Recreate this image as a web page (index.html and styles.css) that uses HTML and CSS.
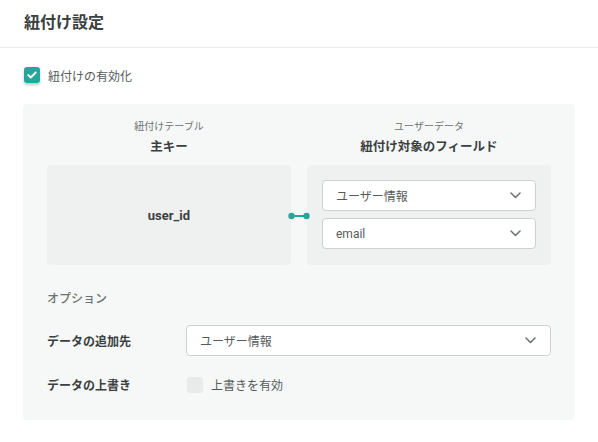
FILE: index.html
```html
<!DOCTYPE html>
<html lang="ja">
<head>
<meta charset="utf-8">
<link rel="stylesheet" href="styles.css">
</head>
<body>
<header class="header"><h1 class="title">紐付け設定</h1></header>
<main class="content">
  <label class="check-row">
    <span class="checkbox checked">
      <svg width="10" height="8" viewBox="0 0 10 8"><path d="M1.3 4.1 L3.8 6.5 L8.7 1.5" fill="none" stroke="#fff" stroke-width="1.9" stroke-linecap="round" stroke-linejoin="round"/></svg>
    </span>
    <span class="check-label">紐付けの有効化</span>
  </label>

  <section class="panel">
    <div class="mapping">
      <div class="col">
        <div class="col-sub">紐付けテーブル</div>
        <div class="col-title">主キー</div>
        <div class="box key-box">user_id</div>
      </div>
      <div class="col">
        <div class="col-sub">ユーザーデータ</div>
        <div class="col-title">紐付け対象のフィールド</div>
        <div class="box field-box">
          <div class="select"><span>ユーザー情報</span><svg class="chev" width="11" height="7" viewBox="0 0 11 7"><path d="M1 1 L5.5 5.5 L10 1" fill="none" stroke="#6f7777" stroke-width="1.6" stroke-linecap="round" stroke-linejoin="round"/></svg></div>
          <div class="select"><span>email</span><svg class="chev" width="11" height="7" viewBox="0 0 11 7"><path d="M1 1 L5.5 5.5 L10 1" fill="none" stroke="#6f7777" stroke-width="1.6" stroke-linecap="round" stroke-linejoin="round"/></svg></div>
        </div>
      </div>
      <svg class="connector" width="22" height="8" viewBox="0 0 22 8"><line x1="3" y1="4" x2="19" y2="4" stroke="#26a69a" stroke-width="2"/><circle cx="3.5" cy="4" r="3.2" fill="#26a69a"/><circle cx="18.5" cy="4" r="3.2" fill="#26a69a"/></svg>
    </div>

    <div class="options-title">オプション</div>
    <div class="opt-row">
      <div class="opt-label">データの追加先</div>
      <div class="select wide"><span>ユーザー情報</span><svg class="chev" width="11" height="7" viewBox="0 0 11 7"><path d="M1 1 L5.5 5.5 L10 1" fill="none" stroke="#6f7777" stroke-width="1.6" stroke-linecap="round" stroke-linejoin="round"/></svg></div>
    </div>
    <div class="opt-row second">
      <div class="opt-label">データの上書き</div>
      <label class="check-inline"><span class="checkbox off"></span><span class="check-label">上書きを有効</span></label>
    </div>
  </section>
</main>
</body>
</html>
```

FILE: styles.css
```css
* { box-sizing: border-box; }
body {
  margin: 0;
  background: #fff;
  font-family: Roboto, "Noto Sans CJK JP", sans-serif;
  color: #3d4343;
}
.header {
  height: 48px;
  border-bottom: 1px solid #ececec;
  padding: 0 24px;
  display: flex;
  align-items: center;
}
.title {
  margin: 0;
  font-size: 16px;
  font-weight: 700;
  color: #3a4040;
  line-height: 20px;
  padding-bottom: 2px;
}
.content { padding: 19px 23px 0; }
.check-row {
  display: flex;
  align-items: center;
  height: 16px;
  margin-bottom: 21px;
  margin-left: 1px;
}
.checkbox {
  width: 16px;
  height: 16px;
  border-radius: 3px;
  display: flex;
  align-items: center;
  justify-content: center;
  flex: none;
}
.checkbox.checked {
  background: #26a69a;
  box-shadow: 0 2px 3px rgba(0,0,0,0.22);
}
.checkbox.off { background: #e9ebeb; }
.check-label {
  font-size: 12px;
  color: #555b5b;
  margin-left: 8px;
}
.panel {
  background: #f6f8f8;
  border-radius: 4px;
  padding: 16px 24px 20px;
}
.mapping {
  position: relative;
  display: grid;
  grid-template-columns: 1fr 1fr;
  column-gap: 16px;
}
.col { display: flex; flex-direction: column; align-items: center; }
.col-sub {
  font-size: 10px;
  line-height: 14px;
  color: #6c7272;
  margin-bottom: 4px;
}
.col-title {
  font-size: 12.5px;
  line-height: 18px;
  font-weight: 700;
  color: #3a4040;
  margin-bottom: 9px;
}
.box {
  width: 100%;
  height: 100px;
  background: #eff1f1;
  border-radius: 4px;
}
.key-box {
  display: flex;
  align-items: center;
  justify-content: center;
  font-size: 13px;
  font-weight: 700;
  color: #3a4040;
}
.field-box {
  padding: 15px 15px 0;
  display: flex;
  flex-direction: column;
  gap: 7px;
}
.select {
  height: 31px;
  background: #fff;
  border: 1px solid #cdd0d0;
  border-radius: 4px;
  display: flex;
  align-items: center;
  justify-content: space-between;
  padding: 0 14px 0 13px;
  font-size: 12px;
  color: #555b5b;
}
.connector {
  position: absolute;
  left: calc(50% - 11px);
  top: 92px;
}
.options-title {
  margin-top: 26px;
  font-size: 12px;
  line-height: 16px;
  color: #6c7272;
  font-weight: 500;
}
.opt-row {
  display: flex;
  align-items: center;
  margin-top: 18px;
}
.opt-row.second { margin-top: 13px; height: 31px; }
.opt-label {
  width: 139px;
  flex: none;
  font-size: 12px;
  font-weight: 700;
  color: #3a4040;
}
.select.wide { flex: 1; }
.check-inline { display: flex; align-items: center; margin-left: 1px; }
```
